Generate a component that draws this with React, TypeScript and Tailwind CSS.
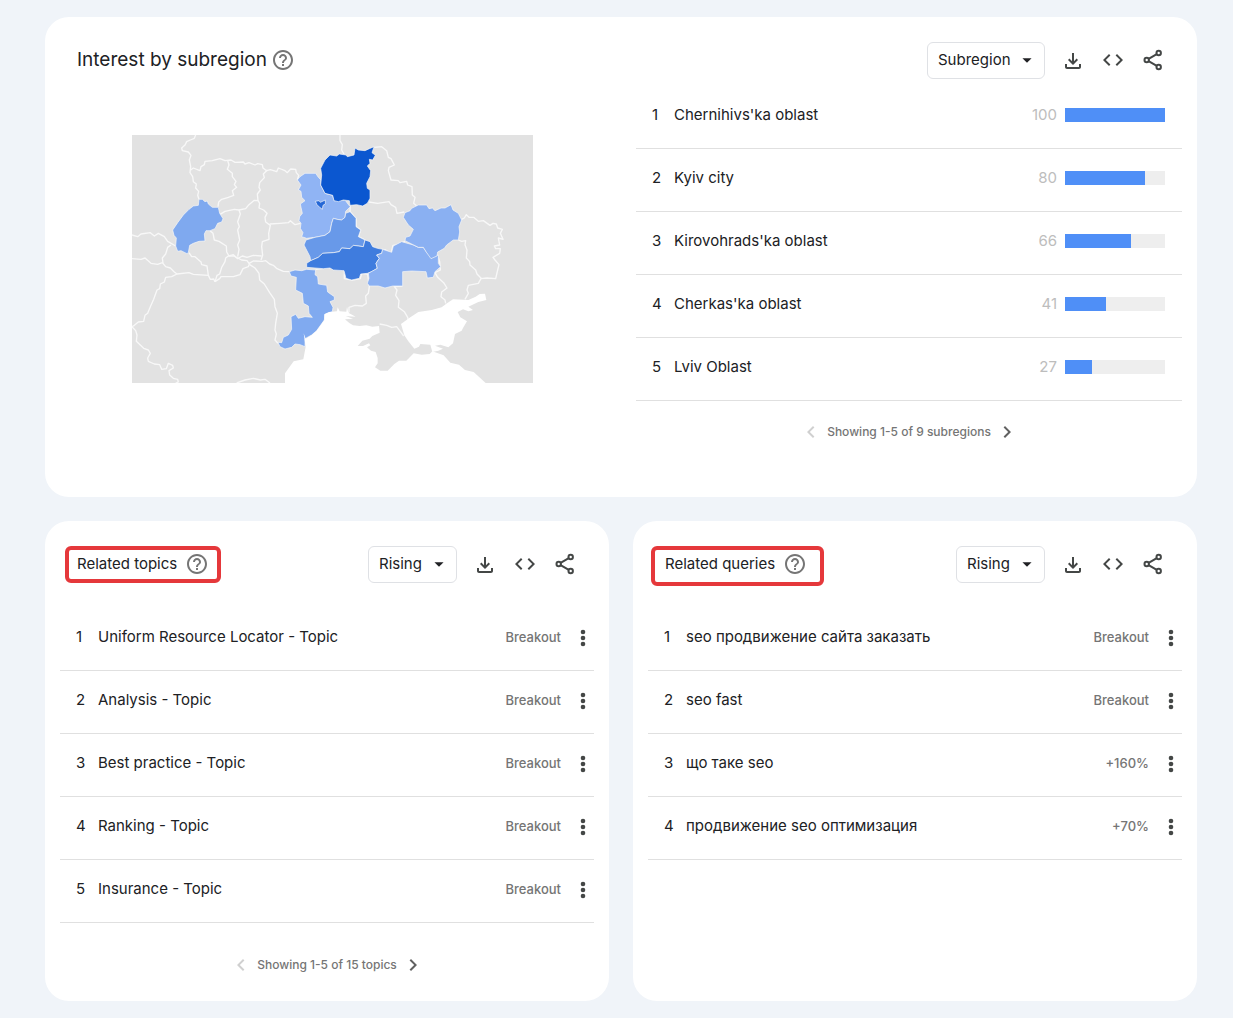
import { ReactNode } from 'react';
import { MdArrowDropDown, MdChevronLeft, MdChevronRight, MdCode, MdHelpOutline, MdOutlineFileDownload } from 'react-icons/md';

const subregions = [
  { name: "Chernihivs'ka oblast", value: 100 },
  { name: 'Kyiv city', value: 80 },
  { name: "Kirovohrads'ka oblast", value: 66 },
  { name: "Cherkas'ka oblast", value: 41 },
  { name: 'Lviv Oblast', value: 27 },
];

const topics = [
  { name: 'Uniform Resource Locator - Topic', value: 'Breakout' },
  { name: 'Analysis - Topic', value: 'Breakout' },
  { name: 'Best practice - Topic', value: 'Breakout' },
  { name: 'Ranking - Topic', value: 'Breakout' },
  { name: 'Insurance - Topic', value: 'Breakout' },
];

const queries = [
  { name: 'seo продвижение сайта заказать', value: 'Breakout' },
  { name: 'seo fast', value: 'Breakout' },
  { name: 'що таке seo', value: '+160%' },
  { name: 'продвижение seo оптимизация', value: '+70%' },
];

const borders = [
  '212,15 208,25 196,30 185,35 180,45 170,54 172,62 190,66 198,76 193,90 197,110 195,128 203,140 205,155 214,162 212,174 221,184 218,196 222,208',
  '197,120 205,114 225,122 228,110 238,104 240,94 262,92 285,86 300,92 318,90 330,97 355,96 360,102 372,98 390,105 398,101 412,104 414,114 425,122 436,119 455,125 460,114 480,122 487,128 497,117 512,118 514,128 521,136 517,150',
  '308,92 312,105 307,118 322,130 322,140 333,154 328,164 335,172 322,182 326,196 310,202 290,208 281,216 279,230',
  '427,120 415,132 418,143 404,158 402,172 406,180 397,192 399,212 388,211 370,226 362,236 342,240 328,238 300,244 284,254',
  '342,240 346,252 338,275 343,290 338,300 344,330 338,345 342,358 338,380',
  '399,212 404,220 402,234 416,240 426,250 420,262 422,276 436,286 431,310 432,328 412,335 410,350 413,376 408,390',
  '434,282 465,280 490,278 496,272 510,284 526,280',
  '255,302 264,310 268,330 282,334 304,348 305,366 312,378 325,374 338,386 352,378 366,382 385,376 410,378',
  '21,315 38,320 48,312 76,308 88,318 100,310 118,320 128,334 152,348',
  '138,345 128,352 122,372 112,384 114,400',
  '21,386 48,388 60,384 78,400 98,403 112,398 122,410 136,414 148,426 156,432 192,428 205,433 250,436 256,448 266,447 270,455',
  '192,368 200,380 210,380 228,396 230,404 246,408 250,436',
  '270,455 276,436 284,432 290,412 300,395 302,384 310,378',
  '156,432 140,440 122,442 118,456 106,462 104,476 96,480 86,508 76,530 68,550 60,556 56,574 40,576 28,586 21,590',
  '21,590 32,602 36,615 34,634 56,655 70,660 76,670 68,684 70,694 88,702 104,704 110,718 124,716 130,700 143,706 145,714 132,722 134,735 145,745 158,748 160,756 152,759',
  '270,455 284,446 288,440 325,440 345,434 354,416 370,410 374,400',
  '310,378 326,378 350,390 366,392 372,400 385,393 412,394 422,392 434,402 445,406 456,416 475,424 493,425',
  '374,404 390,414 402,430 404,450 418,462 434,488 448,508 450,530 457,550 452,580 450,600 454,612 450,630 459,640',
  '335,759 360,750 385,745 406,750 420,748 435,759',
  '645,15 645,32 652,44 650,60 660,78',
  '748,52 770,50 785,62 790,82 798,86 808,105 792,112 790,122 798,150 820,152 825,158 845,154 848,165 861,170 862,195 870,202 866,220 878,230',
  '732,216 758,220 792,215 798,224 812,232 816,250 838,246',
  '676,226 675,245 693,265 693,290 707,300 700,320 720,330',
  '772,358 782,360 798,370 804,346 822,344 840,334',
  '1010,268 1018,264 1024,254 1032,262 1046,262 1060,274 1075,272 1095,286 1104,280 1114,282 1118,294 1132,298 1126,310 1134,328 1120,324 1124,345 1108,348 1112,356 1126,356 1124,370 1104,382 1110,390 1122,404 1118,420 1112,446 1086,444 1068,446 1060,460 1030,466 1026,480 1030,490 1020,508',
  '1000,330 1010,334 1022,332 1020,344 1026,360 1024,384 1034,395 1035,405 1052,420 1056,432 1070,446',
  '918,388 938,376 944,395 946,420 930,428 938,442 956,458 966,474 950,486 948,500 960,510 962,520',
  '832,468 808,470 816,480 812,496 822,512 820,532 838,545 848,562 850,572',
  '658,425 658,446 682,450 706,446 710,430 728,432 733,470 730,490 722,498 724,520 712,528 690,526 672,532 672,545 664,558',
  '572,418 590,416 605,414 622,412',
  '764,582 785,586 800,592 815,590 836,618',
];

const oblasts = [
  { fill: '#7fa9ef', points: '222,208 232,208 240,215 247,213 250,222 262,232 280,232 284,250 294,266 290,276 278,280 270,296 255,302 243,302 238,312 240,333 222,334 205,340 194,346 190,368 186,371 168,362 158,364 152,348 154,324 147,316 143,300 158,278 175,255 192,238 205,228 220,226' },
  { fill: '#90b4f4', points: '517,150 525,140 540,130 572,130 580,142 588,150 587,165 600,190 623,196 627,212 660,210 672,226 676,230 662,244 660,262 650,270 636,268 625,265 620,280 615,305 600,316 570,322 545,325 530,320 534,308 526,295 528,280 522,272 524,260 532,250 528,232 526,222 540,212 530,202 528,184 520,180 528,165' },
  { fill: '#0b57d0', points: '587,165 590,135 587,115 600,90 615,75 635,78 643,72 663,75 667,80 687,75 690,54 700,60 720,62 733,56 747,50 741,68 751,76 743,90 733,88 735,100 727,108 737,122 735,140 725,160 727,175 735,180 735,205 727,220 713,228 695,224 675,226 673,212 655,210 640,215 627,212 623,196 600,190' },
  { fill: '#2467d6', points: '571,214 582,212 586,217 601,210 601,222 594,226 592,238 584,232 576,224' },
  { fill: '#6899e9', points: '675,245 693,265 693,290 707,300 700,320 720,330 715,350 685,346 675,356 650,354 643,365 625,368 593,370 580,382 557,392 555,380 537,345 543,330 570,322 600,316 615,305 620,280 625,265 636,268 650,270 660,262 662,250' },
  { fill: '#3f7cde', points: '545,412 545,400 557,392 580,382 593,370 625,368 643,365 650,354 675,356 685,346 715,350 720,330 735,335 743,350 757,355 773,358 770,370 755,375 763,385 753,400 757,415 740,425 727,430 707,432 703,445 680,450 663,445 657,422 625,420 615,414 595,416' },
  { fill: '#8ab0f2', points: '773,358 800,367 805,348 830,335 865,345 880,352 895,352 907,370 920,382 940,375 940,400 947,410 930,425 925,442 907,444 903,425 860,423 833,425 833,468 803,468 780,474 760,468 733,468 727,460 732,445 730,430 757,415 753,400 763,385 755,375 770,370' },
  { fill: '#8ab0f2', points: '835,262 840,248 855,242 860,235 880,225 905,225 912,236 922,234 930,242 948,234 960,234 978,224 984,240 1000,250 1010,270 1002,290 1004,306 1000,330 985,330 965,345 958,355 938,366 936,378 918,386 905,368 895,352 880,352 860,342 840,332 842,322 855,318 865,298 850,285' },
  { fill: '#80aaf0', points: '493,425 510,420 530,422 545,418 572,420 570,434 578,440 580,462 605,466 608,486 628,500 628,510 615,515 624,532 622,545 600,553 598,570 575,602 560,615 540,626 540,650 525,644 510,642 500,652 480,657 465,650 459,637 470,638 475,622 490,615 500,598 498,560 512,553 520,565 540,560 562,562 552,550 550,528 535,520 532,490 512,480 514,442 498,438' },
];

const blackSea =
  'M598 553 L612 546 L636 544 L638 532 L644 544 L664 545 L666 530 L670 548 L692 560 L662 558 L684 566 L660 568 L672 578 L684 586 L704 588 L724 586 L742 590 L762 588 L764 608 L742 618 L734 626 L712 632 L698 648 L714 648 L732 640 L736 646 L726 652 L738 662 L752 666 L758 684 L758 700 L750 712 L766 722 L788 722 L808 702 L822 692 L844 692 L866 670 L890 674 L914 672 L922 664 L956 676 L976 698 L1002 704 L1020 720 L1046 726 L1082 759 L480 759 L480 730 L506 694 L535 688 L542 650 L536 610 L542 626 L560 615 L575 602 L598 570 Z';
const azovSea =
  'M828 582 L856 562 L880 546 L920 540 L950 532 L966 520 L984 508 L1030 510 L1052 500 L1064 492 L1080 491 L1084 510 L1060 516 L1030 530 L1044 540 L1030 544 L1014 538 L998 546 L1006 562 L1026 574 L1014 594 L1010 602 L990 612 L984 640 L970 652 L946 644 L930 647 L954 656 L940 662 L922 666 L916 644 L886 642 L882 650 L868 656 L850 634 L838 616 Z';

function RegionMap() {
  return (
    <svg viewBox="21 15 1203 744" className="w-[401px] max-w-full" role="img" aria-label="Interest by subregion map">
      <rect x="21" y="15" width="1203" height="744" fill="#e2e2e2" />
      <g fill="none" stroke="#f8f8f8" strokeWidth="4" strokeLinejoin="round">
        {borders.map((points) => (
          <polyline key={points} points={points} />
        ))}
      </g>
      <g stroke="#f8f8f8" strokeWidth="2" strokeLinejoin="round">
        {oblasts.map((oblast) => (
          <polygon key={oblast.points} points={oblast.points} fill={oblast.fill} />
        ))}
      </g>
      <path d={blackSea} fill="#fff" />
      <path d={azovSea} fill="#fff" />
    </svg>
  );
}

function ShareIcon() {
  return (
    <svg viewBox="0 0 24 24" className="size-6" fill="none" stroke="currentColor" strokeWidth="2">
      <circle cx="17.7" cy="5" r="2.2" />
      <circle cx="5.7" cy="12" r="2.2" />
      <circle cx="17.7" cy="19" r="2.2" />
      <path d="M7.6 10.9 L15.8 6.1 M7.6 13.1 L15.8 17.9" />
    </svg>
  );
}

function MoreIcon() {
  return (
    <svg viewBox="0 0 24 24" className="size-6" fill="currentColor">
      <circle cx="12" cy="6" r="2.3" />
      <circle cx="12" cy="12" r="2.3" />
      <circle cx="12" cy="18" r="2.3" />
    </svg>
  );
}

function IconButton({ label, children }: { label: string; children: ReactNode }) {
  return (
    <button aria-label={label} className="flex size-10 items-center justify-center text-[#444746]">
      {children}
    </button>
  );
}

type HeaderProps = { title: ReactNode; label: string; option: string; selectClass: string };

function CardHeader({ title, label, option, selectClass }: HeaderProps) {
  return (
    <header className="flex h-9 items-center justify-between pr-6 pl-8">
      {title}
      <div className="flex items-center">
        <div className="relative mr-2">
          <select aria-label={label} className={`mt-px block h-[37px] appearance-none rounded-md border border-[#dfe1e5] bg-white pl-[10px] text-[15px] text-[#202124] ${selectClass}`}>
            <option>{option}</option>
          </select>
          <MdArrowDropDown size={22} className="pointer-events-none absolute top-2 right-[7px] text-[#202124]" />
        </div>
        <IconButton label="Download">
          <MdOutlineFileDownload size={24} className="mt-0.5" />
        </IconButton>
        <IconButton label="Embed">
          <MdCode size={24} />
        </IconButton>
        <IconButton label="Share">
          <ShareIcon />
        </IconButton>
      </div>
    </header>
  );
}

function Pager({ text }: { text: string }) {
  return (
    <nav className="flex items-center justify-center gap-1 text-xs font-medium text-[#757575]">
      <button aria-label="Previous" disabled className="text-[#d0d0d0]">
        <MdChevronLeft size={24} />
      </button>
      <span>{text}</span>
      <button aria-label="Next" className="text-[#616161]">
        <MdChevronRight size={24} />
      </button>
    </nav>
  );
}

function Row({ rank, name, children }: { rank: number; name: string; children: ReactNode }) {
  return (
    <li className="flex h-[63px] items-center border-b border-[#e0e0e0] pb-1 pl-4 text-[15px] text-[#202124]">
      <span className="w-[22px]">{rank}</span>
      <span className="flex-1">{name}</span>
      {children}
    </li>
  );
}

function RelatedList({ items }: { items: { name: string; value: string }[] }) {
  return (
    <ol className="mx-[15px] mt-[26px]">
      {items.map((item, i) => (
        <Row key={item.name} rank={i + 1} name={item.name}>
          <span className="mt-0.5 text-[13px] font-medium text-[#757575]">{item.value}</span>
          <button aria-label={`Options for ${item.name}`} className="mt-0.5 -mr-px ml-[10px] text-[#444746]">
            <MoreIcon />
          </button>
        </Row>
      ))}
    </ol>
  );
}

export default function App() {
  return (
    <main className="min-h-screen bg-[#f0f4f9] py-[17px] pr-9 pl-[45px] font-['Inter',sans-serif]">
      <section className="min-h-[480px] rounded-3xl bg-white pt-[25px]">
        <CardHeader
          label="Resolution"
          option="Subregion"
          selectClass="w-[118px]"
          title={
            <h2 className="flex items-center gap-1 text-[19px] text-[#202124]">
              Interest by subregion
              <MdHelpOutline size={24} className="text-[#757575]" />
            </h2>
          }
        />
        <div className="mt-2 grid grid-cols-2">
          <div className="mt-[49px] flex items-start justify-center pr-0.5">
            <RegionMap />
          </div>
          <div className="px-[15px]">
            <ol>
              {subregions.map((region, i) => (
                <Row key={region.name} rank={i + 1} name={region.name}>
                  <span className="text-[#bdbdbd]">{region.value}</span>
                  <div className="mr-[17px] ml-2 h-[14px] w-[100px] bg-[#eeeeee]">
                    <div className="h-full bg-[#4f8ff7]" style={{ width: `${region.value}%` }} />
                  </div>
                </Row>
              ))}
            </ol>
            <div className="pt-[19px]">
              <Pager text="Showing 1-5 of 9 subregions" />
            </div>
          </div>
        </div>
      </section>

      <div className="mt-6 grid grid-cols-2 gap-6">
        <section className="min-h-[480px] rounded-3xl bg-white pt-[25px]">
          <CardHeader
            label="Sort topics"
            option="Rising"
            selectClass="w-[89px]"
            title={
              <h2 className="relative flex items-center gap-2 text-[15px] text-[#202124]">
                Related topics
                <MdHelpOutline size={24} className="text-[#757575]" />
                <span className="absolute -inset-x-3 -top-[6px] -bottom-[7px] rounded-md border-4 border-[#e5383b]" />
              </h2>
            }
          />
          <RelatedList items={topics} />
          <div className="pt-[30px]">
            <Pager text="Showing 1-5 of 15 topics" />
          </div>
        </section>

        <section className="min-h-[480px] rounded-3xl bg-white pt-[25px]">
          <CardHeader
            label="Sort queries"
            option="Rising"
            selectClass="w-[89px]"
            title={
              <h2 className="relative flex items-center gap-2 text-[15px] text-[#202124]">
                Related queries
                <MdHelpOutline size={24} className="text-[#757575]" />
                <span className="absolute -top-[6px] -right-[17px] -bottom-[10px] -left-[14px] rounded-md border-4 border-[#e5383b]" />
              </h2>
            }
          />
          <RelatedList items={queries} />
        </section>
      </div>
    </main>
  );
}
